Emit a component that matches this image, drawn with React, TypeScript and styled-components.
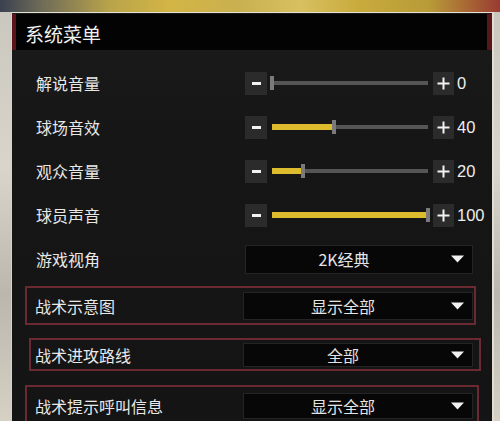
import styled, { createGlobalStyle } from 'styled-components';

const GlobalStyle = createGlobalStyle`
  html, body {
    margin: 0;
    padding: 0;
    height: 421px;
    overflow: hidden;
  }
  body {
    font-family: 'Noto Sans CJK SC', 'Noto Sans', sans-serif;
    background:
      linear-gradient(90deg, #3a4150 0%, #6d6a58 8%, #b9a44a 22%, #d3b545 34%, #c9b050 48%, #d8c060 60%, #c8aa3c 72%, #b89a38 86%, #9a3b32 100%) top / 100% 12px no-repeat,
      linear-gradient(180deg, #c9c6bf 0%, #d9d5ca 40%, #bcb7ad 70%, #d6d1c4 100%);
  }
`;

const Page = styled.div`
  box-sizing: border-box;
  height: 421px;
  padding: 12px 6px 0 11px;
`;

const Panel = styled.div`
  box-sizing: border-box;
  height: 100%;
  border-top: 1px solid #e4e0d4;
  border-left: 1px solid #d6d2c6;
  border-right: 2px solid #e2ddd0;
  background: linear-gradient(180deg, #1b1b1b 0%, #161616 30%, #141414 100%);
`;

const Header = styled.div`
  box-sizing: border-box;
  height: 36px;
  margin-top: 1px;
  display: flex;
  align-items: center;
  padding: 3px 0 0 9px;
  background: #030303;
  border-left: 4px solid #5a141c;
  border-right: 5px solid #5a141c;
  color: #f0f0f0;
  font-size: 19px;
`;

const Body = styled.div`
  padding-top: 11px;
`;

const Row = styled.div`
  height: 44px;
  display: flex;
  align-items: center;
  padding-left: 24px;
`;

const Label = styled.div<{ $width: number }>`
  width: ${({ $width }) => $width}px;
  flex: none;
  color: #e8e8e8;
  font-size: 16px;
  line-height: 1;
  white-space: nowrap;
`;

const Slider = styled.div`
  display: flex;
  align-items: center;
`;

const StepButton = styled.div<{ $w: number }>`
  width: ${({ $w }) => $w}px;
  height: 23px;
  background: #2b2b2b;
  display: flex;
  align-items: center;
  justify-content: center;
`;

const StepIcon = styled.svg`
  width: 13px;
  height: 13px;
`;

const Track = styled.div`
  position: relative;
  width: 156px;
  height: 4px;
  margin: 0 5px;
  background: #555;
`;

const Fill = styled.div`
  position: absolute;
  left: 0;
  top: -1px;
  height: 6px;
  background: #dcbb2c;
`;

const Thumb = styled.div`
  position: absolute;
  top: -5px;
  width: 4px;
  height: 14px;
  margin-left: -2px;
  background: #7a7a7a;
`;

const Value = styled.div`
  margin-left: 3px;
  color: #ededed;
  font-family: 'Liberation Sans', sans-serif;
  font-size: 16.5px;
`;

const Select = styled.div<{ $h: number; $w: number }>`
  box-sizing: border-box;
  width: ${({ $w }) => $w}px;
  height: ${({ $h }) => $h}px;
  display: flex;
  align-items: center;
  background: #070707;
  border: 1px solid #242424;
  color: #e4e4e4;
  font-size: 16px;
`;

const SelectText = styled.div`
  flex: 1;
  text-align: center;
`;

const Arrow = styled.svg`
  width: 13px;
  height: 8px;
  margin: 0 8px 0 9px;
  flex: none;
`;

const Box = styled.div<{ $left: number; $padL: number; $padR: number; $h: number; $top: number }>`
  box-sizing: border-box;
  height: ${({ $h }) => $h}px;
  margin: ${({ $top }) => $top}px 0 0 ${({ $left }) => $left}px;
  padding: 0 ${({ $padR }) => $padR}px 0 ${({ $padL }) => $padL}px;
  display: inline-flex;
  align-items: center;
  border: 2px solid #6b2a31;
  vertical-align: top;
`;

const BoxLine = styled.div`
  display: block;
  line-height: 0;
`;

const sliders = [
  { label: '解说音量', value: 0 },
  { label: '球场音效', value: 40 },
  { label: '观众音量', value: 20 },
  { label: '球员声音', value: 100 },
];

const boxes = [
  { label: '战术示意图', value: '显示全部', left: 13, padL: 8, padR: 1, h: 39, top: 5, sh: 28 },
  { label: '战术进攻路线', value: '全部', left: 17, padL: 4, padR: 6, h: 33, top: 13, sh: 24 },
  { label: '战术提示呼叫信息', value: '显示全部', left: 13, padL: 8, padR: 4, h: 42, top: 14, sh: 26 },
];

const DropArrow = () => (
  <Arrow viewBox="0 0 13 8">
    <polygon points="0,0.5 13,0.5 6.5,7.5" fill="#f2f2f2" />
  </Arrow>
);

const Minus = () => (
  <StepIcon viewBox="0 0 13 13">
    <rect x="2" y="5" width="9" height="3" fill="#f2f2f2" />
  </StepIcon>
);

const Plus = () => (
  <StepIcon viewBox="0 0 13 13">
    <rect x="0.5" y="5.5" width="12" height="2" fill="#f2f2f2" />
    <rect x="5.5" y="0.5" width="2" height="12" fill="#f2f2f2" />
  </StepIcon>
);

const App = () => (
  <>
    <GlobalStyle />
    <Page>
      <Panel>
        <Header>系统菜单</Header>
        <Body>
          {sliders.map((s) => (
            <Row key={s.label}>
              <Label $width={209}>{s.label}</Label>
              <Slider>
                <StepButton $w={22}>
                  <Minus />
                </StepButton>
                <Track>
                  <Fill style={{ width: `${s.value}%` }} />
                  <Thumb style={{ left: `${s.value}%` }} />
                </Track>
                <StepButton $w={21}>
                  <Plus />
                </StepButton>
                <Value>{s.value}</Value>
              </Slider>
            </Row>
          ))}
          <Row>
            <Label $width={209}>游戏视角</Label>
            <Select $h={29} $w={228}>
              <SelectText>2K经典</SelectText>
              <DropArrow />
            </Select>
          </Row>
          {boxes.map((b) => (
            <BoxLine key={b.label}>
              <Box $left={b.left} $padL={b.padL} $padR={b.padR} $h={b.h} $top={b.top}>
                <Label $width={208}>{b.label}</Label>
                <Select $h={b.sh} $w={230}>
                  <SelectText>{b.value}</SelectText>
                  <DropArrow />
                </Select>
              </Box>
            </BoxLine>
          ))}
        </Body>
      </Panel>
    </Page>
  </>
);

export default App;
